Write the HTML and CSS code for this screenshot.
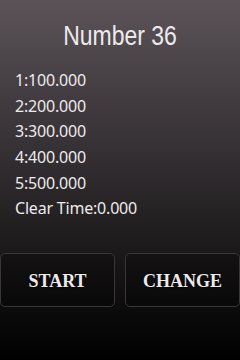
FILE: index.html
```html
<!DOCTYPE html>
<html lang="en">
<head>
    <meta charset="UTF-8">
    <meta name="viewport" content="width=device-width, initial-scale=1.0">
    <title>Number 36</title>
    <link rel="stylesheet" href="styles.css">
</head>
<body>
    <!-- 제목 -->
    <h1 class="tit">Number 36</h1>
    <!-- 기록 목록 -->
    <ul class="rank">
        <li>1:100.000</li>
        <li>2:200.000</li>
        <li>3:300.000</li>
        <li>4:400.000</li>
        <li>5:500.000</li>
        <li>Clear Time:0.000</li>
    </ul>
    <!-- 버튼 -->
    <div class="btns">
        <a href="#" class="btn">START</a>
        <a href="#" class="btn">CHANGE</a>
    </div>
</body>
</html>
```

FILE: styles.css
```css
:root{
    --txt: #eeeaec;
}
html{
    background: #000;
}
body{
    margin: 0;
    width: 240px;
    height: 360px;
    overflow: hidden;
    /* 위는 회보라, 아래로 검정 */
    background: linear-gradient(#5b5358, #000 360px);
    color: var(--txt);
    font-family: "Noto Sans", "Open Sans", sans-serif;
}
.tit{
    margin: 0;
    padding-top: 20px;
    height: 37px;
    line-height: 32px;
    text-align: center;
    font-family: "Liberation Sans", sans-serif;
    font-size: 28px;
    font-weight: normal;
    /* 좁은 글꼴이 없어서 가로로 줄임 */
    transform: scaleX(.82);
}
.rank{
    list-style: none;
    margin: 11px 0 0;
    padding: 0 0 0 15px;
}
.rank li{
    height: 25.7px;
    line-height: 25.7px;
    font-size: 16px;
    letter-spacing: -.2px;
}
.btns{
    display: flex;
    gap: 10px;
    margin-top: 31px;
}
.btn{
    flex: 1;
    height: 54px;
    padding-top: 2px;
    box-sizing: border-box;
    display: flex;
    align-items: center;
    justify-content: center;
    border: 1px solid #3b3739;
    border-radius: 5px;
    background: rgba(0,0,0,.25);
    color: var(--txt);
    text-decoration: none;
    font-family: "Liberation Serif", serif;
    font-size: 18px;
    font-weight: bold;
    text-shadow: 0 0 2px #000;
}
```
